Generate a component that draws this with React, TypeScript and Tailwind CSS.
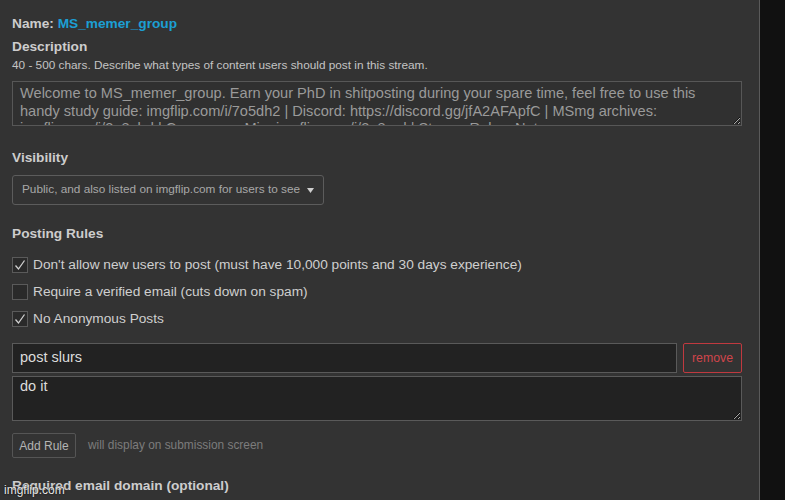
import React from "react"

const font = { fontFamily: '"Liberation Sans", Arial, sans-serif' }

function Check({ checked, label }: { checked: boolean; label: string }) {
  return (
    <label className="flex h-[20px] items-center">
      <span className="flex h-[16px] w-[16px] shrink-0 items-center justify-center border border-[#5a5a5a] bg-[#2a2a2a]">
        {checked && (
          <svg width="14" height="14" viewBox="0 0 14 14">
            <path d="M2.5 7.5 L5.5 11 L11.5 2.5" fill="none" stroke="#d0d0d0" strokeWidth="1.3" />
          </svg>
        )}
      </span>
      <span className="ml-[5px] text-[13.7px] text-[#cfcfcf]">{label}</span>
    </label>
  )
}

export default function App() {
  return (
    <div className="relative flex h-[500px] w-[785px] overflow-hidden bg-[#111]" style={font}>
      <div className="h-full w-[760px] shrink-0 border-r border-[#5a5a5a] bg-[#333] pl-[12px] pr-[17px] pt-[16px]">
        <div className="text-[13.7px] font-bold leading-[16px] text-[#cdcdcd]">
          Name: <span className="text-[#1c9fd3]">MS_memer_group</span>
        </div>

        <div className="mt-[7px] text-[13.7px] font-bold leading-[16px] text-[#cdcdcd]">Description</div>
        <div className="mt-[3px] text-[11.8px] leading-[14px] text-[#c4c4c4]">
          40 - 500 chars. Describe what types of content users should post in this stream.
        </div>
        <textarea
          readOnly
          className="mt-[9px] block h-[45px] w-[730px] overflow-hidden border border-[#575757] bg-[#303030] px-[7px] pt-[3px] text-[14.6px] leading-[17.5px] text-[#9a9a9a] outline-none"
          defaultValue="Welcome to MS_memer_group. Earn your PhD in shitposting during your spare time, feel free to use this handy study guide: imgflip.com/i/7o5dh2 | Discord: https://discord.gg/jfA2AFApfC | MSmg archives: imgflip.com/i/3o8ebd | Co-owners: Mi... imgflip.com/i/3o8rnd | Stream Rules: Not..."
        />

        <div className="mt-[24px] text-[13.7px] font-bold leading-[16px] text-[#cdcdcd]">Visibility</div>
        <div className="mt-[9px] flex h-[30px] w-[312px] items-center justify-between rounded-[3px] border border-[#5c5c5c] bg-[#333] pl-[9px] pr-[9px]">
          <span className="text-[11.8px] text-[#a8a8a8]">Public, and also listed on imgflip.com for users to see</span>
          <svg width="7" height="5" viewBox="0 0 7 5">
            <path d="M0 0 L7 0 L3.5 5 Z" fill="#cfcfcf" />
          </svg>
        </div>

        <div className="mt-[21px] text-[13.7px] font-bold leading-[16px] text-[#cdcdcd]">Posting Rules</div>
        <div className="mt-[13px] flex flex-col gap-[7px]">
          <Check checked label="Don't allow new users to post (must have 10,000 points and 30 days experience)" />
          <Check checked={false} label="Require a verified email (cuts down on spam)" />
          <Check checked label="No Anonymous Posts" />
        </div>

        <div className="mt-[14px] flex w-[730px] gap-[6px]">
          <div className="flex h-[30px] flex-1 items-center border border-[#5a5a5a] bg-[#222] px-[7px] text-[14.5px] text-[#dcdcdc]">
            post slurs
          </div>
          <button className="h-[30px] w-[59px] rounded-[2px] border border-[#c0393f] text-[12.3px] text-[#d0454b]">
            remove
          </button>
        </div>
        <textarea
          readOnly
          className="mt-[3px] block h-[45px] w-[730px] overflow-hidden border border-[#5a5a5a] bg-[#222] px-[7px] pt-[1px] text-[14.5px] leading-[17px] text-[#dcdcdc] outline-none"
          defaultValue="do it"
        />

        <div className="mt-[12px] flex items-center">
          <button className="h-[25px] w-[64px] rounded-[2px] border border-[#555] text-[12px] text-[#b4b4b4]">
            Add Rule
          </button>
          <span className="ml-[12px] text-[11.9px] text-[#7c7c7c]">will display on submission screen</span>
        </div>

        <div className="mt-[20px] text-[13.7px] font-bold leading-[16px] text-[#cdcdcd]">Required email domain (optional)</div>
        <div className="mt-[6px] text-[11.8px] leading-[14px] text-[#c4c4c4]">
          Users must have a verified email address with this domain to submit images to this stream
        </div>
      </div>

      <div className="absolute bottom-[3px] left-[4px] text-[12px] leading-[14px] text-[#e8e8e8] [text-shadow:0_0_2px_#000]">
        imgflip.com
      </div>
    </div>
  )
}
